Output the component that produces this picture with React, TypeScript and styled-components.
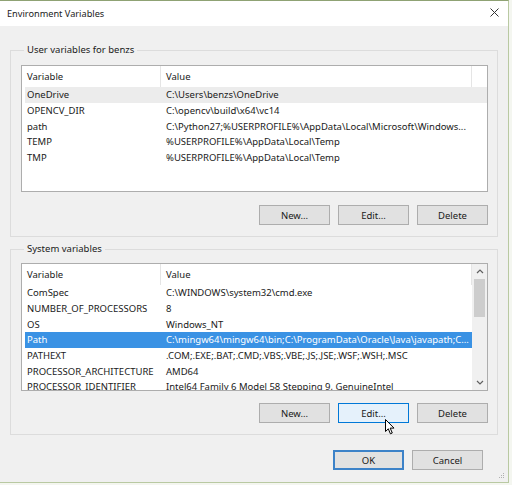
import React from 'react';
import styled, { createGlobalStyle } from 'styled-components';

interface EnvVar {
  name: string;
  value: string;
}

const userVars: EnvVar[] = [
  { name: 'OneDrive', value: 'C:\\Users\\benzs\\OneDrive' },
  { name: 'OPENCV_DIR', value: 'C:\\opencv\\build\\x64\\vc14' },
  { name: 'path', value: 'C:\\Python27;%USERPROFILE%\\AppData\\Local\\Microsoft\\Windows...' },
  { name: 'TEMP', value: '%USERPROFILE%\\AppData\\Local\\Temp' },
  { name: 'TMP', value: '%USERPROFILE%\\AppData\\Local\\Temp' },
];

const systemVars: EnvVar[] = [
  { name: 'ComSpec', value: 'C:\\WINDOWS\\system32\\cmd.exe' },
  { name: 'NUMBER_OF_PROCESSORS', value: '8' },
  { name: 'OS', value: 'Windows_NT' },
  { name: 'Path', value: 'C:\\mingw64\\mingw64\\bin;C:\\ProgramData\\Oracle\\Java\\javapath;C...' },
  { name: 'PATHEXT', value: '.COM;.EXE;.BAT;.CMD;.VBS;.VBE;.JS;.JSE;.WSF;.WSH;.MSC' },
  { name: 'PROCESSOR_ARCHITECTURE', value: 'AMD64' },
  { name: 'PROCESSOR_IDENTIFIER', value: 'Intel64 Family 6 Model 58 Stepping 9, GenuineIntel' },
];

const GlobalStyle = createGlobalStyle`
  html, body {
    margin: 0;
    padding: 0;
    background: #f4f6f0;
  }
  body {
    font-family: 'Noto Sans', 'Open Sans', sans-serif;
    font-size: 9.5px;
    color: #1a1a1a;
  }
`;

const Dialog = styled.div`
  position: relative;
  box-sizing: border-box;
  width: 509px;
  height: 483px;
  border-top: 1px solid #8fa274;
  border-right: 1px solid #b9c9a2;
  border-bottom: 1px solid #b9c9a2;
  background: #f0f0f0;
  display: flex;
  flex-direction: column;
`;

const TitleBar = styled.div`
  height: 25px;
  background: #ffffff;
  display: flex;
  align-items: center;
  justify-content: space-between;
  padding: 0 9px 0 7px;
  font-size: 9.2px;
`;

const CloseIcon = styled.svg`
  width: 9px;
  height: 9px;
  margin-bottom: 2px;
`;

const Body = styled.div`
  flex: 1;
  display: flex;
  flex-direction: column;
  padding: 17px 0 0 10px;
`;

const Group = styled.fieldset<{ $gap: number }>`
  box-sizing: border-box;
  width: 488px;
  margin: 0 0 ${(p) => p.$gap}px 0;
  padding: 0 9px 11px 10px;
  border: 1px solid #dcdcdc;
  display: flex;
  flex-direction: column;
`;

const Legend = styled.legend`
  padding: 0 3px;
  margin-left: 3px;
  line-height: 14px;
  font-size: 9.5px;
`;

const ListBox = styled.div<{ $height: number; $top: number }>`
  position: relative;
  box-sizing: border-box;
  height: ${(p) => p.$height}px;
  margin-top: ${(p) => p.$top}px;
  background: #ffffff;
  border: 1px solid #adadad;
  display: flex;
  overflow: hidden;
`;

const ListInner = styled.div`
  flex: 1;
  min-width: 0;
  padding-left: 3px;
`;

const HeaderRow = styled.div`
  display: grid;
  grid-template-columns: 136px 311px;
  height: 21px;
  align-items: center;
`;

const HeaderCell = styled.div<{ $pad?: number }>`
  height: 100%;
  display: flex;
  align-items: center;
  padding-left: ${(p) => p.$pad ?? 2}px;
  border-right: 1px solid #e5e5e5;
  box-sizing: border-box;
`;

const Row = styled.div<{ $state?: 'selected' | 'inactive' }>`
  display: grid;
  grid-template-columns: 136px 311px;
  height: 15.7px;
  align-items: center;
  white-space: nowrap;
  background: ${(p) =>
    p.$state === 'selected' ? '#3a92e4' : p.$state === 'inactive' ? '#ececec' : 'transparent'};
  color: ${(p) => (p.$state === 'selected' ? '#ffffff' : '#1a1a1a')};
`;

const Cell = styled.div`
  overflow: hidden;
  padding-left: 2px;
  padding-right: 2px;
`;

const ValueCell = styled(Cell)`
  padding-left: 5px;
`;

const ScrollBar = styled.div`
  width: 15px;
  background: #f0f0f0;
  display: flex;
  flex-direction: column;
  align-items: center;
`;

const ScrollArrow = styled.div`
  height: 15px;
  display: flex;
  align-items: center;
  justify-content: center;
`;

const ScrollTrack = styled.div`
  flex: 1;
  width: 100%;
  display: flex;
  flex-direction: column;
`;

const ScrollThumb = styled.div`
  margin: 0 2px;
  height: 38px;
  background: #cdcdcd;
`;

const ButtonRow = styled.div<{ $top: number; $gap: number }>`
  display: flex;
  justify-content: flex-end;
  gap: ${(p) => p.$gap}px;
  margin-top: ${(p) => p.$top}px;
`;

const Button = styled.button<{ $variant?: 'hover' | 'default' }>`
  box-sizing: border-box;
  width: 71px;
  height: 20px;
  padding: 0;
  font-family: 'Noto Sans', 'Open Sans', sans-serif;
  font-size: 9.5px;
  color: #1a1a1a;
  background: ${(p) => (p.$variant === 'hover' ? '#e5f1fb' : '#e1e1e1')};
  border: ${(p) =>
    p.$variant === 'hover'
      ? '1px solid #0078d7'
      : p.$variant === 'default'
      ? '2px solid #3c82c8'
      : '1px solid #adadad'};
`;

const FooterRow = styled.div`
  display: flex;
  justify-content: flex-end;
  gap: 8px;
  padding-right: 25px;
  margin-top: 15px;
`;

const Cursor = styled.svg`
  position: absolute;
  left: 385px;
  top: 418px;
  width: 11px;
  height: 16px;
`;

const Grip = styled.svg`
  position: absolute;
  right: 3px;
  bottom: 3px;
  width: 8px;
  height: 8px;
`;

const VarList: React.FC<{
  vars: EnvVar[];
  height: number;
  top: number;
  scroll?: boolean;
  selected?: number;
  state: 'selected' | 'inactive';
}> = ({ vars, height, top, scroll, selected, state }) => (
  <ListBox $height={height} $top={top}>
    <ListInner>
      <HeaderRow>
        <HeaderCell>Variable</HeaderCell>
        <HeaderCell $pad={5}>Value</HeaderCell>
      </HeaderRow>
      {vars.map((v, i) => (
        <Row key={v.name} $state={i === selected ? state : undefined}>
          <Cell>{v.name}</Cell>
          <ValueCell>{v.value}</ValueCell>
        </Row>
      ))}
    </ListInner>
    {scroll && (
      <ScrollBar>
        <ScrollArrow>
          <svg width="8" height="5" viewBox="0 0 8 5">
            <path d="M1 4 L4 1 L7 4" fill="none" stroke="#606060" strokeWidth="1.2" />
          </svg>
        </ScrollArrow>
        <ScrollTrack>
          <ScrollThumb />
        </ScrollTrack>
        <ScrollArrow>
          <svg width="8" height="5" viewBox="0 0 8 5">
            <path d="M1 1 L4 4 L7 1" fill="none" stroke="#606060" strokeWidth="1.2" />
          </svg>
        </ScrollArrow>
      </ScrollBar>
    )}
  </ListBox>
);

export default function App() {
  return (
    <>
      <GlobalStyle />
      <Dialog>
        <TitleBar>
          <span>Environment Variables</span>
          <CloseIcon viewBox="0 0 9 9">
            <path d="M0.5 0.5 L8.5 8.5 M8.5 0.5 L0.5 8.5" stroke="#333" strokeWidth="1" />
          </CloseIcon>
        </TitleBar>
        <Body>
          <Group $gap={5}>
            <Legend>User variables for benzs</Legend>
            <VarList vars={userVars} height={127} top={8} selected={0} state="inactive" />
            <ButtonRow $top={13} $gap={8}>
              <Button>New...</Button>
              <Button>Edit...</Button>
              <Button>Delete</Button>
            </ButtonRow>
          </Group>
          <Group $gap={0}>
            <Legend>System variables</Legend>
            <VarList vars={systemVars} height={128} top={7} scroll selected={3} state="selected" />
            <ButtonRow $top={12} $gap={8}>
              <Button>New...</Button>
              <Button $variant="hover">Edit...</Button>
              <Button>Delete</Button>
            </ButtonRow>
          </Group>
          <FooterRow>
            <Button $variant="default">OK</Button>
            <Button>Cancel</Button>
          </FooterRow>
        </Body>
        <Cursor viewBox="0 0 11 16">
          <path
            d="M0.5 0.5 L0.5 12.5 L3.3 9.8 L5.4 14.8 L7.3 14 L5.2 9.1 L9 9.1 Z"
            fill="#ffffff"
            stroke="#000000"
            strokeWidth="1"
            strokeLinejoin="round"
          />
        </Cursor>
        <Grip viewBox="0 0 8 8">
          <rect x="6" y="2" width="1" height="1" fill="#b0b0b0" />
          <rect x="4" y="4" width="1" height="1" fill="#b0b0b0" />
          <rect x="6" y="4" width="1" height="1" fill="#b0b0b0" />
          <rect x="2" y="6" width="1" height="1" fill="#b0b0b0" />
          <rect x="4" y="6" width="1" height="1" fill="#b0b0b0" />
          <rect x="6" y="6" width="1" height="1" fill="#b0b0b0" />
        </Grip>
      </Dialog>
    </>
  );
}
